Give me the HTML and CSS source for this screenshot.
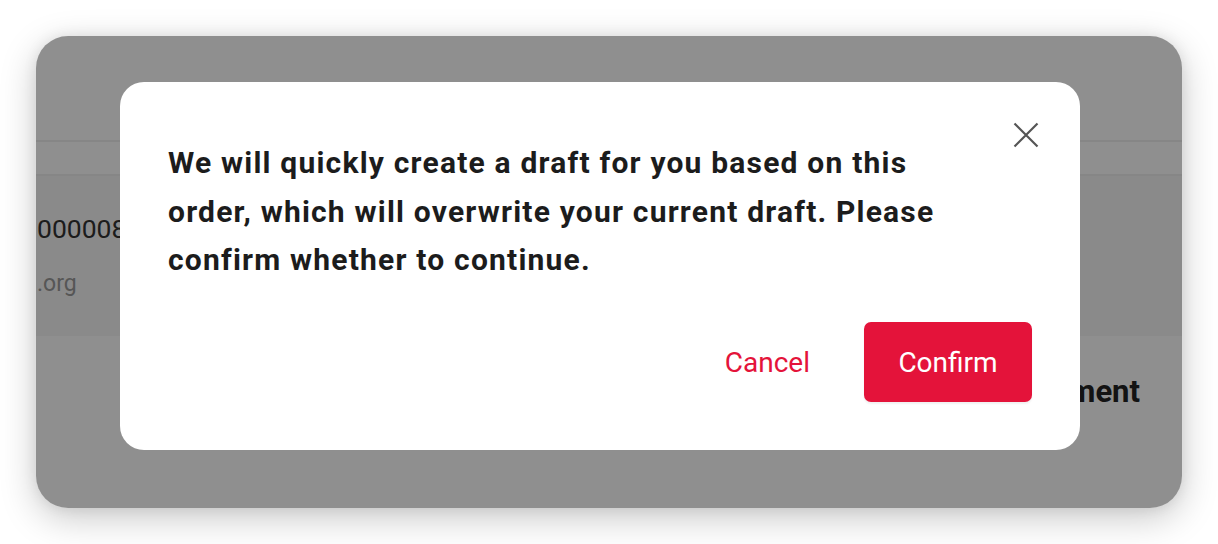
FILE: index.html
```html
<!DOCTYPE html>
<html lang="en">
<head>
<meta charset="utf-8">
<title>Confirm draft</title>
<link rel="stylesheet" href="styles.css">
</head>
<body>
<div class="stage">
  <div class="card">
    <div class="page">
      <div class="page-header"></div>
      <div class="page-tabs"></div>
      <div class="page-info">
        <div class="order-no">00000826</div>
        <div class="order-mail">.org</div>
      </div>
      <div class="page-section">
        <div class="section-title">Shipment</div>
      </div>
    </div>
    <div class="overlay">
      <div class="modal" role="dialog">
        <button class="close" aria-label="Close">
          <svg width="26" height="26" viewBox="0 0 26 26"><path d="M1.5 1.5 L24.5 24.5 M24.5 1.5 L1.5 24.5" stroke="#555" stroke-width="2.2" fill="none"/></svg>
        </button>
        <p class="message">We will quickly create a draft for you based on this order, which will overwrite your current draft. Please confirm whether to continue.</p>
        <div class="actions">
          <button class="btn btn-text">Cancel</button>
          <button class="btn btn-primary">Confirm</button>
        </div>
      </div>
    </div>
  </div>
</div>
</body>
</html>
```

FILE: styles.css
```css
* { box-sizing: border-box; }
html, body { margin: 0; padding: 0; background: #fff; }
body { font-family: Roboto, "Noto Sans", "Liberation Sans", sans-serif; }

.stage {
  padding: 36px;
  height: 544px;
}

.card {
  position: relative;
  width: 1146px;
  height: 472px;
  border-radius: 32px;
  overflow: hidden;
  background: #fff;
  box-shadow: 0 10px 36px rgba(0,0,0,0.22), 0 0 14px rgba(0,0,0,0.08);
}

.page { display: flex; flex-direction: column; height: 100%; }
.page-header { height: 106px; flex: none; border-bottom: 2px solid #efefef; }
.page-tabs { height: 34px; flex: none; border-bottom: 2px solid #efefef; }
.page-info {
  height: 160px;
  flex: none;
  background: #f6f6f6;
  padding: 37px 0 0 1px;
}
.order-no { font-size: 26.5px; color: #333; line-height: 32px; }
.order-mail { font-size: 23px; color: #999; line-height: 28px; margin-top: 25px; }
.page-section { padding: 37px 42px 0 0; display: flex; justify-content: flex-end; }
.section-title { font-size: 31px; font-weight: 700; color: #222; }

.overlay {
  position: absolute;
  inset: 0;
  background: rgba(0,0,0,0.44);
  padding: 46px 0 0 84px;
}

.modal {
  position: relative;
  width: 960px;
  height: 368px;
  background: #fff;
  border-radius: 24px;
  padding: 57px 48px 48px 48px;
  display: flex;
  flex-direction: column;
}

.close {
  position: absolute;
  top: 40px;
  right: 41px;
  width: 26px;
  height: 26px;
  padding: 0;
  border: 0;
  background: none;
  display: flex;
}

.message {
  margin: 0;
  max-width: 800px;
  font-size: 30px;
  line-height: 48.5px;
  font-weight: 700;
  color: #1c1c1c;
  letter-spacing: 1.2px;
}

.actions {
  margin-top: auto;
  display: flex;
  justify-content: flex-end;
  align-items: center;
  gap: 30px;
}

.btn {
  font-family: Roboto, "Noto Sans", "Liberation Sans", sans-serif;
  font-size: 28px;
  height: 80px;
  border: 0;
  border-radius: 7px;
  cursor: pointer;
}
.btn-text { background: none; color: #e4133a; padding: 0 24px; }
.btn-primary {
  background: #e4133a;
  color: #fff;
  width: 168px;
  box-shadow: 0 2px 2px rgba(0,0,0,0.06);
}
```
